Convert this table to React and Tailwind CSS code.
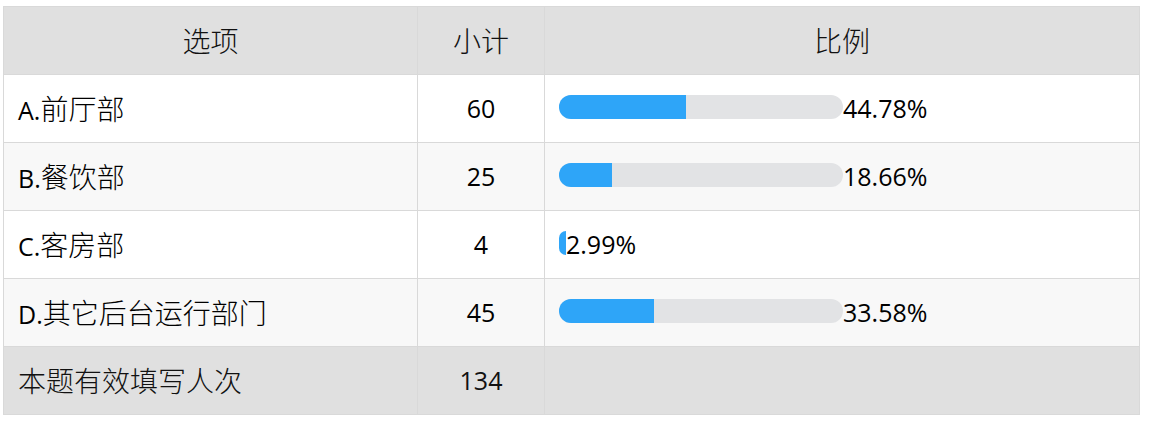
import React from 'react';

const rows = [
  { label: 'A.', name: '前厅部', count: 60, pct: 44.78 },
  { label: 'B.', name: '餐饮部', count: 25, pct: 18.66 },
  { label: 'C.', name: '客房部', count: 4, pct: 2.99 },
  { label: 'D.', name: '其它后台运行部门', count: 45, pct: 33.58 },
];

function Bar({ pct }) {
  // tiny values show only the blue stub, like the original
  if (pct < 5) {
    return (
      <div className="flex items-center">
        <div className="h-[24px] w-[7px] mb-[4px] rounded-l-full bg-[#2ea5f8]" />
        <span>{pct.toFixed(2)}%</span>
      </div>
    );
  }
  return (
    <div className="flex items-center">
      <div className="h-[24px] w-[284px] mb-[4px] rounded-full bg-[#e2e3e5] overflow-hidden">
        <div className="h-full bg-[#2ea5f8]" style={{ width: pct + '%' }} />
      </div>
      <span>{pct.toFixed(2)}%</span>
    </div>
  );
}

export default function App() {
  return (
    <div className="pt-[6px] pl-[3px] bg-white min-h-[421px] font-['Open_Sans','Noto_Sans_CJK_SC',sans-serif] text-[25px] text-black">
      <table className="w-[1137px] border-collapse table-fixed">
        <colgroup>
          <col className="w-[414px]" />
          <col className="w-[127px]" />
          <col />
        </colgroup>
        <thead>
          <tr className="h-[68px] bg-[#e0e0e0] text-[#111]">
            <th className="border border-[#d9d9d9] font-light text-[28px]">选项</th>
            <th className="border border-[#d9d9d9] font-light text-[28px]">小计</th>
            <th className="border border-[#d9d9d9] font-light text-[28px]">比例</th>
          </tr>
        </thead>
        <tbody>
          {rows.map((r, i) => (
            <tr key={r.label} className={'h-[68px] ' + (i % 2 ? 'bg-[#f8f8f8]' : 'bg-white')}>
              <td className="border border-[#d9d9d9] pl-[14px]">
                {r.label}<span className="text-[28px] font-light">{r.name}</span>
              </td>
              <td className="border border-[#d9d9d9] text-center">{r.count}</td>
              <td className="border border-[#d9d9d9] pl-[14px]">
                <Bar pct={r.pct} />
              </td>
            </tr>
          ))}
          <tr className="h-[68px] bg-[#e0e0e0] text-[#111]">
            <td className="border border-[#d9d9d9] pl-[14px] text-[28px] font-light">本题有效填写人次</td>
            <td className="border border-[#d9d9d9] text-center">134</td>
            <td className="border border-[#d9d9d9]"></td>
          </tr>
        </tbody>
      </table>
    </div>
  );
}
